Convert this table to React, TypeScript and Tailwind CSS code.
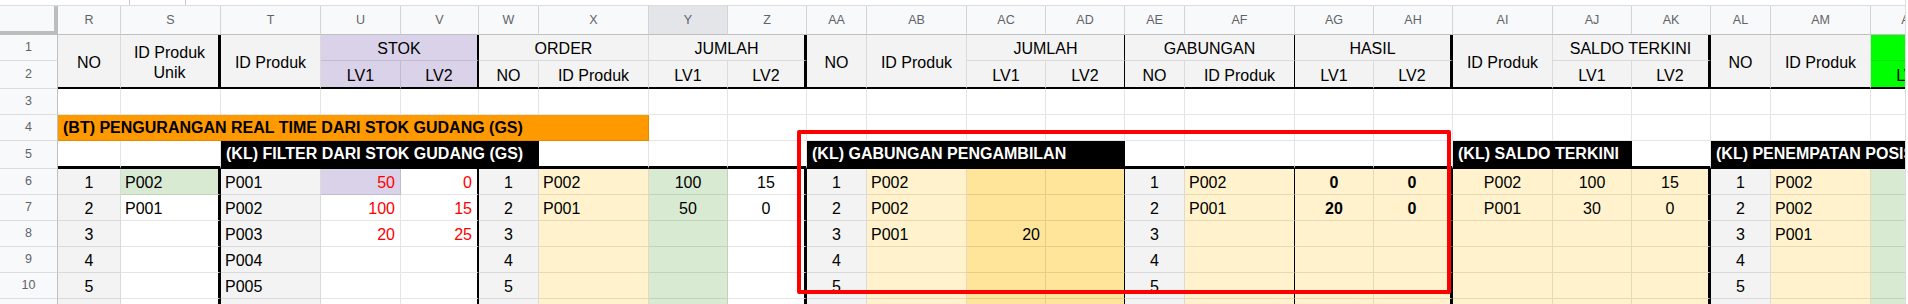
import { Fragment, type ReactNode } from 'react';

const THIN = 'border-r border-r-black/10';
const THICK = 'border-r-[3px] border-r-black';
const MID = 'border-r-2 border-r-black';
const LINE = 'border-r border-r-black';

const GRAY = 'bg-[#f3f3f3]';
const YEL = 'bg-[#fff2cc]';
const YEL2 = 'bg-[#ffe599]';
const GRN = 'bg-[#d9ead3]';
const LAV = 'bg-[#d9d2e9]';
const WHITE = 'bg-white';

const L = 'justify-start pl-[4px]';
const C = 'justify-center';
const R = 'justify-end pr-[5px]';

type Col = { letter: string; edge: string; bg: string[]; align: string; text?: string; vals: string[] };

const fill = (bg: string) => [bg, bg, bg, bg, bg, bg];
const nums = ['1', '2', '3', '4', '5'];

const cols: Col[] = [
  { letter: 'R', edge: THIN, bg: fill(GRAY), align: C, vals: nums },
  { letter: 'S', edge: THICK, bg: [GRN, WHITE, WHITE, WHITE, WHITE, WHITE], align: L, vals: ['P002', 'P001'] },
  { letter: 'T', edge: THIN, bg: fill(GRAY), align: L, vals: ['P001', 'P002', 'P003', 'P004', 'P005'] },
  { letter: 'U', edge: THIN, bg: [LAV, WHITE, WHITE, WHITE, WHITE, WHITE], align: R, text: 'text-[#ff0000]', vals: ['50', '100', '20'] },
  { letter: 'V', edge: MID, bg: fill(WHITE), align: R, text: 'text-[#ff0000]', vals: ['0', '15', '25'] },
  { letter: 'W', edge: THIN, bg: fill(GRAY), align: C, vals: nums },
  { letter: 'X', edge: THIN, bg: fill(YEL), align: L, vals: ['P002', 'P001'] },
  { letter: 'Y', edge: THIN, bg: fill(GRN), align: C, vals: ['100', '50'] },
  { letter: 'Z', edge: THICK, bg: fill(WHITE), align: C, vals: ['15', '0'] },
  { letter: 'AA', edge: THIN, bg: fill(GRAY), align: C, vals: nums },
  { letter: 'AB', edge: THIN, bg: fill(YEL), align: L, vals: ['P002', 'P002', 'P001'] },
  { letter: 'AC', edge: THIN, bg: fill(YEL2), align: R, vals: ['', '', '20'] },
  { letter: 'AD', edge: LINE, bg: fill(YEL2), align: C, vals: [] },
  { letter: 'AE', edge: THIN, bg: fill(GRAY), align: C, vals: nums },
  { letter: 'AF', edge: LINE, bg: fill(YEL), align: L, vals: ['P002', 'P001'] },
  { letter: 'AG', edge: THIN, bg: fill(YEL), align: C, text: 'font-bold', vals: ['0', '20'] },
  { letter: 'AH', edge: THICK, bg: fill(YEL), align: C, text: 'font-bold', vals: ['0', '0'] },
  { letter: 'AI', edge: THIN, bg: fill(YEL), align: C, vals: ['P002', 'P001'] },
  { letter: 'AJ', edge: THIN, bg: fill(YEL), align: C, vals: ['100', '30'] },
  { letter: 'AK', edge: THICK, bg: fill(YEL), align: C, vals: ['15', '0'] },
  { letter: 'AL', edge: THIN, bg: fill(GRAY), align: C, vals: nums },
  { letter: 'AM', edge: THIN, bg: fill(YEL), align: L, vals: ['P002', 'P002', 'P001'] },
  { letter: 'AN', edge: THIN, bg: fill(GRN), align: C, vals: [] },
];

const byLetter = (l: string) => cols.find((c) => c.letter === l)!;

function RowHead({ n, tall }: { n: number; tall?: boolean }) {
  return (
    <div
      className={`flex items-center justify-center border-r border-b border-r-[#c0c0c0] border-b-[#dadce0] bg-[#f8f9fa] text-[12.5px] text-[#5f6368] ${tall ? 'row-span-2' : ''}`}
    >
      {n}
    </div>
  );
}

function Top({ className, children }: { className: string; children?: ReactNode }) {
  return (
    <div className={`flex items-center justify-center overflow-hidden whitespace-nowrap pt-[3px] text-center text-[16px] leading-[20px] ${className}`}>
      {children}
    </div>
  );
}

function Sub({ l, label, bg }: { l: string; label: string; bg: string }) {
  return <Top className={`${byLetter(l).edge} border-b-2 border-b-black ${bg}`}>{label}</Top>;
}

function Banner({ className, children }: { className: string; children: ReactNode }) {
  return (
    <div className={`flex items-center overflow-hidden whitespace-nowrap pl-[5px] text-[16px] font-bold ${className}`}>{children}</div>
  );
}

export default function App() {
  return (
    <div className="flex h-[304px] w-[1908px] overflow-hidden bg-white font-['Liberation_Sans',Arial,sans-serif] text-black">
      <div className="flex w-[1905px] flex-col">
        <div className="flex h-[6px] shrink-0 border-b border-[#dadce0]">
          <div className="w-[129px]" />
          <div className="w-px bg-[#c7c7c7]" />
          <div className="w-[55px]" />
          <div className="w-px bg-[#c7c7c7]" />
        </div>
        <div className="relative flex-1 overflow-hidden">
          <div className="grid w-[1950px] grid-cols-[58px_63px_100px_100px_80px_78px_60px_110px_79px_79px_60px_100px_79px_79px_60px_110px_79px_79px_100px_79px_79px_60px_100px_79px] grid-rows-[29px_26px_28px_26px_26px_28px_26px_26px_26px_26px_26px_26px]">
            {/* column letters */}
            <div className="border-r-4 border-b-4 border-[#bdbdbd] bg-[#f8f9fa]" />
            {cols.map((c) => (
              <div
                key={c.letter}
                className={`flex items-center justify-center border-r border-b border-r-[#d3d3d3] border-b-[#c0c0c0] text-[12.5px] text-[#5f6368] ${c.letter === 'Y' ? 'bg-[#e3e5e8]' : 'bg-[#f8f9fa]'}`}
              >
                {c.letter}
              </div>
            ))}

            {/* header row 1 */}
            <RowHead n={1} />
            <Top className={`row-span-2 ${THIN} border-b-2 border-b-black ${GRAY}`}>NO</Top>
            <Top className={`row-span-2 ${THICK} border-b-2 border-b-black ${GRAY}`}>
              ID Produk
              <br />
              Unik
            </Top>
            <Top className={`row-span-2 ${THIN} border-b-2 border-b-black ${GRAY}`}>ID Produk</Top>
            <Top className={`col-span-2 ${MID} border-b border-b-black/10 ${LAV}`}>STOK</Top>
            <Top className={`col-span-2 ${THIN} border-b border-b-black/10 ${GRAY}`}>ORDER</Top>
            <Top className={`col-span-2 ${THICK} border-b border-b-black/10 ${GRAY}`}>JUMLAH</Top>
            <Top className={`row-span-2 ${THIN} border-b-2 border-b-black ${GRAY}`}>NO</Top>
            <Top className={`row-span-2 ${THIN} border-b-2 border-b-black ${GRAY}`}>ID Produk</Top>
            <Top className={`col-span-2 ${LINE} border-b border-b-black/10 ${GRAY}`}>JUMLAH</Top>
            <Top className={`col-span-2 ${LINE} border-b border-b-black/10 ${GRAY}`}>GABUNGAN</Top>
            <Top className={`col-span-2 ${THICK} border-b border-b-black/10 ${GRAY}`}>HASIL</Top>
            <Top className={`row-span-2 ${THIN} border-b-2 border-b-black ${GRAY}`}>ID Produk</Top>
            <Top className={`col-span-2 ${THICK} border-b border-b-black/10 ${GRAY}`}>SALDO TERKINI</Top>
            <Top className={`row-span-2 ${THIN} border-b-2 border-b-black ${GRAY}`}>NO</Top>
            <Top className={`row-span-2 ${THIN} border-b-2 border-b-black ${GRAY}`}>ID Produk</Top>
            <Top className={`${THIN} border-b border-b-black/10 bg-[#00ff00]`} />

            {/* header row 2 */}
            <RowHead n={2} />
            <Sub l="U" label="LV1" bg={LAV} />
            <Sub l="V" label="LV2" bg={LAV} />
            <Sub l="W" label="NO" bg={GRAY} />
            <Sub l="X" label="ID Produk" bg={GRAY} />
            <Sub l="Y" label="LV1" bg={GRAY} />
            <Sub l="Z" label="LV2" bg={GRAY} />
            <Sub l="AC" label="LV1" bg={GRAY} />
            <Sub l="AD" label="LV2" bg={GRAY} />
            <Sub l="AE" label="NO" bg={GRAY} />
            <Sub l="AF" label="ID Produk" bg={GRAY} />
            <Sub l="AG" label="LV1" bg={GRAY} />
            <Sub l="AH" label="LV2" bg={GRAY} />
            <Sub l="AJ" label="LV1" bg={GRAY} />
            <Sub l="AK" label="LV2" bg={GRAY} />
            <Sub l="AN" label="LV1" bg="bg-[#00ff00]" />

            {/* row 3 */}
            <RowHead n={3} />
            {cols.map((c) => (
              <div key={c.letter} className="border-r border-b border-black/10 bg-white" />
            ))}

            {/* row 4 */}
            <RowHead n={4} />
            <Banner className="col-span-7 border-r border-b border-black/10 bg-[#ff9900] pt-[1px] text-black">
              (BT) PENGURANGAN REAL TIME DARI STOK GUDANG (GS)
            </Banner>
            {cols.slice(7).map((c) => (
              <div key={c.letter} className="border-r border-b border-black/10 bg-white" />
            ))}

            {/* row 5 */}
            <RowHead n={5} />
            <div className="border-r border-r-black/10 border-b-[3px] border-b-black bg-white" />
            <div className="border-r border-r-black/10 border-b-[3px] border-b-black bg-white" />
            <Banner className="col-span-4 border-b-[3px] border-b-black bg-black text-white">(KL) FILTER DARI STOK GUDANG (GS)</Banner>
            <div className="border-r border-r-black/10 border-b-[3px] border-b-black bg-white" />
            <div className="border-r border-r-black/10 border-b-[3px] border-b-black bg-white" />
            <div className="border-r border-r-black/10 border-b-[3px] border-b-black bg-white" />
            <Banner className="col-span-4 border-b-[3px] border-b-black bg-black text-white">(KL) GABUNGAN PENGAMBILAN</Banner>
            <div className="border-r border-r-black/10 border-b-[3px] border-b-black bg-white" />
            <div className="border-r border-r-black/10 border-b-[3px] border-b-black bg-white" />
            <div className="border-r border-r-black/10 border-b-[3px] border-b-black bg-white" />
            <div className="border-r border-r-black/10 border-b-[3px] border-b-black bg-white" />
            <Banner className="col-span-2 border-b-[3px] border-b-black bg-black text-white">(KL) SALDO TERKINI</Banner>
            <div className="border-r border-r-black/10 border-b-[3px] border-b-black bg-white" />
            <Banner className="col-span-3 border-b-[3px] border-b-black bg-black text-white">(KL) PENEMPATAN POSISI</Banner>

            {/* data rows 6-11 */}
            {[0, 1, 2, 3, 4, 5].map((r) => (
              <Fragment key={r}>
                <RowHead n={r + 6} />
                {cols.map((c) => (
                  <div
                    key={c.letter}
                    className={`flex items-center overflow-hidden whitespace-nowrap pt-[3px] text-[16px] ${c.edge} border-b border-b-black/10 ${c.bg[r]} ${c.align} ${c.text ?? ''}`}
                  >
                    {c.vals[r] ?? ''}
                  </div>
                ))}
              </Fragment>
            ))}
          </div>

          {/* highlight annotation */}
          <div className="pointer-events-none absolute top-[124px] left-[797px] h-[164px] w-[654px] rounded-[2px] border-4 border-[#ff0000]" />
        </div>
      </div>
      <div className="w-[3px] border-l border-[#dadce0] bg-white" />
    </div>
  );
}
